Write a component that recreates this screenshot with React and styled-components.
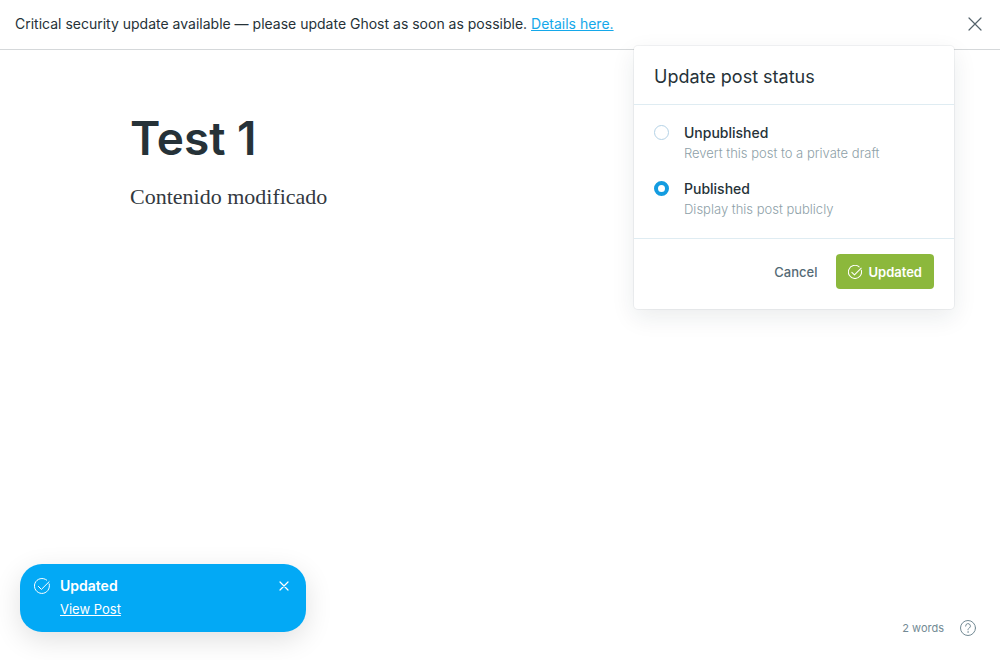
import React, { useState } from "react";
import styled, { createGlobalStyle } from "styled-components";

const GlobalStyle = createGlobalStyle`
  *, *::before, *::after { box-sizing: border-box; }
  body {
    margin: 0;
    background: #fff;
    color: #263238;
    font-family: Inter, "Liberation Sans", sans-serif;
    font-size: 14px;
    line-height: 20px;
  }
  button, input { font: inherit; margin: 0; }
  button { padding: 0; border: 0; background: none; cursor: pointer; }
`;

const Page = styled.div`
  position: relative;
  display: flex;
  flex-direction: column;
  min-height: 100vh;
  overflow: hidden;
`;

const Banner = styled.aside`
  display: flex;
  align-items: center;
  justify-content: space-between;
  padding: 14px 18px 15px 15px;
  border-bottom: 1px solid #d5d8da;
`;

const BannerText = styled.p`
  margin: 0;
`;

const BannerLink = styled.a`
  color: #14a8ea;
  text-decoration: underline;
`;

const IconButton = styled.button`
  display: flex;
  align-items: center;
  justify-content: center;
  color: ${({ $color }) => $color};
`;

const Editor = styled.main`
  flex: 1;
  padding: 60px 13% 0;
`;

const PostTitle = styled.h1`
  margin: 0;
  font-size: 46px;
  font-weight: 600;
  line-height: 56px;
`;

const PostBody = styled.p`
  margin: 15px 0 0;
  color: #33393f;
  font-family: Georgia, "Liberation Serif", serif;
  font-size: 22px;
  line-height: 32px;
`;

const StatusBar = styled.footer`
  display: flex;
  align-items: center;
  justify-content: flex-end;
  gap: 16px;
  padding: 0 24px 23px;
  color: #738a94;
  font-size: 11px;
  line-height: 18px;
`;

const Popover = styled.form`
  position: absolute;
  top: 46px;
  right: 46px;
  width: 320px;
  background: #fff;
  border-radius: 4px;
  box-shadow: 0 0 0 1px rgba(99, 114, 130, 0.08), 0 8px 24px rgba(27, 39, 51, 0.09);
`;

const PopoverTitle = styled.h2`
  margin: 0;
  padding: 21px 20px 17px;
  border-bottom: 1px solid #dfecf2;
  font-size: 18px;
  font-weight: 400;
  line-height: 20px;
`;

const Options = styled.fieldset`
  display: flex;
  flex-direction: column;
  gap: 16px;
  margin: 0;
  padding: 18px 20px 19px;
  border: 0;
  border-bottom: 1px solid #dfecf2;
`;

const Option = styled.label`
  display: flex;
  gap: 15px;
  cursor: pointer;
`;

const Radio = styled.input`
  appearance: none;
  flex: none;
  width: 15px;
  height: 15px;
  margin-top: 2px;
  border: 1px solid #b4d2e6;
  border-radius: 50%;
  background: #fff;

  &:checked {
    border: 4px solid #149ce0;
  }
`;

const OptionText = styled.span`
  display: flex;
  flex-direction: column;
`;

const OptionName = styled.span`
  font-weight: 500;
`;

const OptionHint = styled.span`
  color: #8e9fa8;
  font-size: 13px;
  font-weight: 300;
`;

const Actions = styled.div`
  display: flex;
  align-items: center;
  justify-content: flex-end;
  gap: 19px;
  padding: 15px 20px 20px;
`;

const CancelButton = styled.button`
  && {
    color: #546a75;
    font-size: 13px;
    font-weight: 500;
  }
`;

const UpdateButton = styled.button`
  && {
    display: flex;
    align-items: center;
    gap: 6px;
    height: 35px;
    padding: 0 12px;
    border-radius: 4px;
    background: #8cb83c;
    color: #fff;
    font-size: 13px;
    font-weight: 600;
  }
`;

const Toast = styled.section`
  position: absolute;
  left: 20px;
  bottom: 28px;
  display: flex;
  align-items: flex-start;
  gap: 10px;
  width: 286px;
  padding: 12px 17px 13px 14px;
  border-radius: 22px;
  background: #03a9f5;
  color: #fff;
  box-shadow: 0 8px 28px rgba(0, 0, 0, 0.12);

  > svg { margin-top: 2px; }
  > button { margin-top: 5px; }
`;

const ToastText = styled.div`
  flex: 1;
  display: flex;
  flex-direction: column;
  align-items: flex-start;
  gap: 3px;
`;

const ToastTitle = styled.strong`
  font-weight: 600;
`;

const ToastLink = styled.a`
  color: #fff;
  font-size: 13px;
  text-decoration: underline;
`;

const CloseIcon = ({ size, inset, stroke }) => {
  const far = size - inset;
  return (
    <svg width={size} height={size} viewBox={`0 0 ${size} ${size}`} fill="none" stroke="currentColor" strokeWidth={stroke} strokeLinecap="round" aria-hidden="true">
      <path d={`M${inset} ${inset}L${far} ${far}M${far} ${inset}L${inset} ${far}`} />
    </svg>
  );
};

const CheckIcon = ({ size, stroke = 1 }) => (
  <svg width={size} height={size} viewBox="0 0 16 16" fill="none" stroke="currentColor" strokeWidth={stroke} strokeLinecap="round" strokeLinejoin="round" aria-hidden="true">
    <path d="M15.2 5.9A7.5 7.5 0 1 1 12.7 2.1" />
    <path d="M4.4 8.4l3 3L15.1 3.7" />
  </svg>
);

const HelpIcon = () => (
  <svg width="16" height="16" viewBox="0 0 16 16" fill="none" stroke="currentColor" strokeLinecap="round" aria-hidden="true">
    <circle cx="8" cy="8" r="7.5" />
    <path d="M5.6 6.1a2.4 2.4 0 1 1 3.6 2c-.8.5-1.2.8-1.2 1.7" />
    <circle cx="8" cy="12" r=".4" fill="currentColor" strokeWidth=".5" />
  </svg>
);

const options = [
  { value: "draft", name: "Unpublished", hint: "Revert this post to a private draft" },
  { value: "published", name: "Published", hint: "Display this post publicly" },
];

export default function App() {
  const [status, setStatus] = useState("published");

  return (
    <Page>
      <GlobalStyle />
      <Banner>
        <BannerText>
          Critical security update available — please update Ghost as soon as possible.{" "}
          <BannerLink href="#details">Details here.</BannerLink>
        </BannerText>
        <IconButton type="button" $color="#54626b" aria-label="Dismiss">
          <CloseIcon size={14} inset={1} stroke={1.2} />
        </IconButton>
      </Banner>

      <Editor>
        <PostTitle>Test 1</PostTitle>
        <PostBody>Contenido modificado</PostBody>
      </Editor>

      <StatusBar>
        <span>2 words</span>
        <IconButton type="button" $color="#738a94" aria-label="Help">
          <HelpIcon />
        </IconButton>
      </StatusBar>

      <Popover onSubmit={(event) => event.preventDefault()}>
        <PopoverTitle>Update post status</PopoverTitle>
        <Options aria-label="Post status">
          {options.map(({ value, name, hint }) => (
            <Option key={value}>
              <Radio
                type="radio"
                name="status"
                value={value}
                checked={status === value}
                onChange={() => setStatus(value)}
              />
              <OptionText>
                <OptionName>{name}</OptionName>
                <OptionHint>{hint}</OptionHint>
              </OptionText>
            </Option>
          ))}
        </Options>
        <Actions>
          <CancelButton type="button">Cancel</CancelButton>
          <UpdateButton type="submit">
            <CheckIcon size={14} stroke={1.2} />
            Updated
          </UpdateButton>
        </Actions>
      </Popover>

      <Toast role="status">
        <CheckIcon size={16} />
        <ToastText>
          <ToastTitle>Updated</ToastTitle>
          <ToastLink href="#post">View Post</ToastLink>
        </ToastText>
        <IconButton type="button" $color="#fff" aria-label="Close notification">
          <CloseIcon size={10} inset={1} stroke={1.2} />
        </IconButton>
      </Toast>
    </Page>
  );
}
